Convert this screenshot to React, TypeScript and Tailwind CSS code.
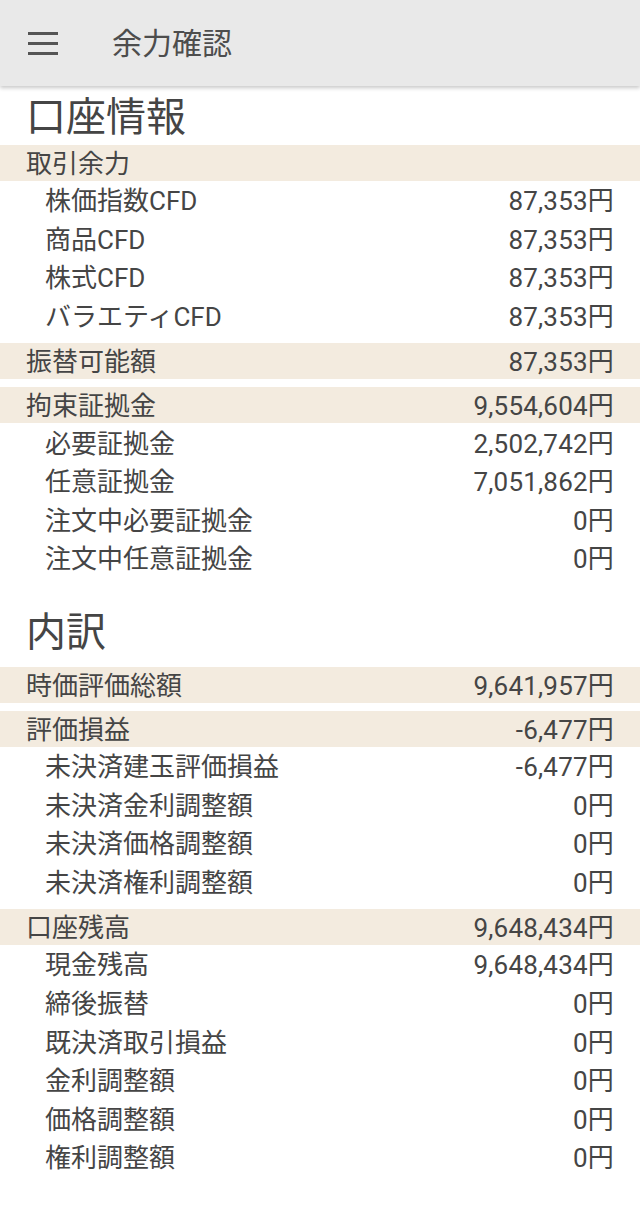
import React from "react";

type Row = { label: string; value: string };
type Group = { head: Row; items: Row[] };

const FONT = { fontFamily: "Roboto, 'Noto Sans CJK JP', sans-serif" };

const ACCOUNT: Group[] = [
  {
    head: { label: "取引余力", value: "" },
    items: [
      { label: "株価指数CFD", value: "87,353円" },
      { label: "商品CFD", value: "87,353円" },
      { label: "株式CFD", value: "87,353円" },
      { label: "バラエティCFD", value: "87,353円" },
    ],
  },
  { head: { label: "振替可能額", value: "87,353円" }, items: [] },
  {
    head: { label: "拘束証拠金", value: "9,554,604円" },
    items: [
      { label: "必要証拠金", value: "2,502,742円" },
      { label: "任意証拠金", value: "7,051,862円" },
      { label: "注文中必要証拠金", value: "0円" },
      { label: "注文中任意証拠金", value: "0円" },
    ],
  },
];

const BREAKDOWN: Group[] = [
  { head: { label: "時価評価総額", value: "9,641,957円" }, items: [] },
  {
    head: { label: "評価損益", value: "-6,477円" },
    items: [
      { label: "未決済建玉評価損益", value: "-6,477円" },
      { label: "未決済金利調整額", value: "0円" },
      { label: "未決済価格調整額", value: "0円" },
      { label: "未決済権利調整額", value: "0円" },
    ],
  },
  {
    head: { label: "口座残高", value: "9,648,434円" },
    items: [
      { label: "現金残高", value: "9,648,434円" },
      { label: "締後振替", value: "0円" },
      { label: "既決済取引損益", value: "0円" },
      { label: "金利調整額", value: "0円" },
      { label: "価格調整額", value: "0円" },
      { label: "権利調整額", value: "0円" },
    ],
  },
];

function Groups({ groups }: { groups: Group[] }) {
  return (
    <div className="flex flex-col">
      {groups.map((g, i) => (
        <div key={g.head.label} className={i > 0 ? "mt-[8px]" : ""}>
          <div className="flex h-[36px] items-center justify-between bg-[#f3ebdf] pt-[2px] pl-[26px] pr-[26px] text-[26px] leading-none">
            <span>{g.head.label}</span>
            <span className="tracking-[0.2px]">{g.head.value}</span>
          </div>
          {g.items.map((r) => (
            <div key={r.label} className="flex h-[38.6px] items-center justify-between pt-[2px] pl-[45px] pr-[26px] text-[26px] leading-none">
              <span>{r.label}</span>
              <span className="tracking-[0.2px]">{r.value}</span>
            </div>
          ))}
        </div>
      ))}
    </div>
  );
}

export default function App() {
  return (
    <div className="min-h-[1207px] w-full bg-white text-[#454545]" style={FONT}>
      {/* ヘッダー */}
      <div className="relative z-10 flex h-[86px] items-center bg-[#e9e9e9] shadow-[0_2px_4px_rgba(0,0,0,0.22)]">
        <div className="ml-[28px] flex w-[30px] flex-col gap-[7px]">
          <span className="block h-[3px] bg-[#555]" />
          <span className="block h-[3px] bg-[#555]" />
          <span className="block h-[3px] bg-[#555]" />
        </div>
        <span className="ml-[54px] pt-[2px] text-[30px] leading-none text-[#4d4d4d]">余力確認</span>
      </div>

      {/* 口座情報 */}
      <div className="mt-[6px] flex h-[52px] items-center pl-[26px] text-[40px] leading-none">口座情報</div>
      <div className="mt-[1px]">
        <Groups groups={ACCOUNT} />
      </div>

      {/* 内訳 */}
      <div className="mt-[29px] flex h-[52px] items-center pl-[26px] text-[40px] leading-none">内訳</div>
      <div className="mt-[8px]">
        <Groups groups={BREAKDOWN} />
      </div>
    </div>
  );
}
